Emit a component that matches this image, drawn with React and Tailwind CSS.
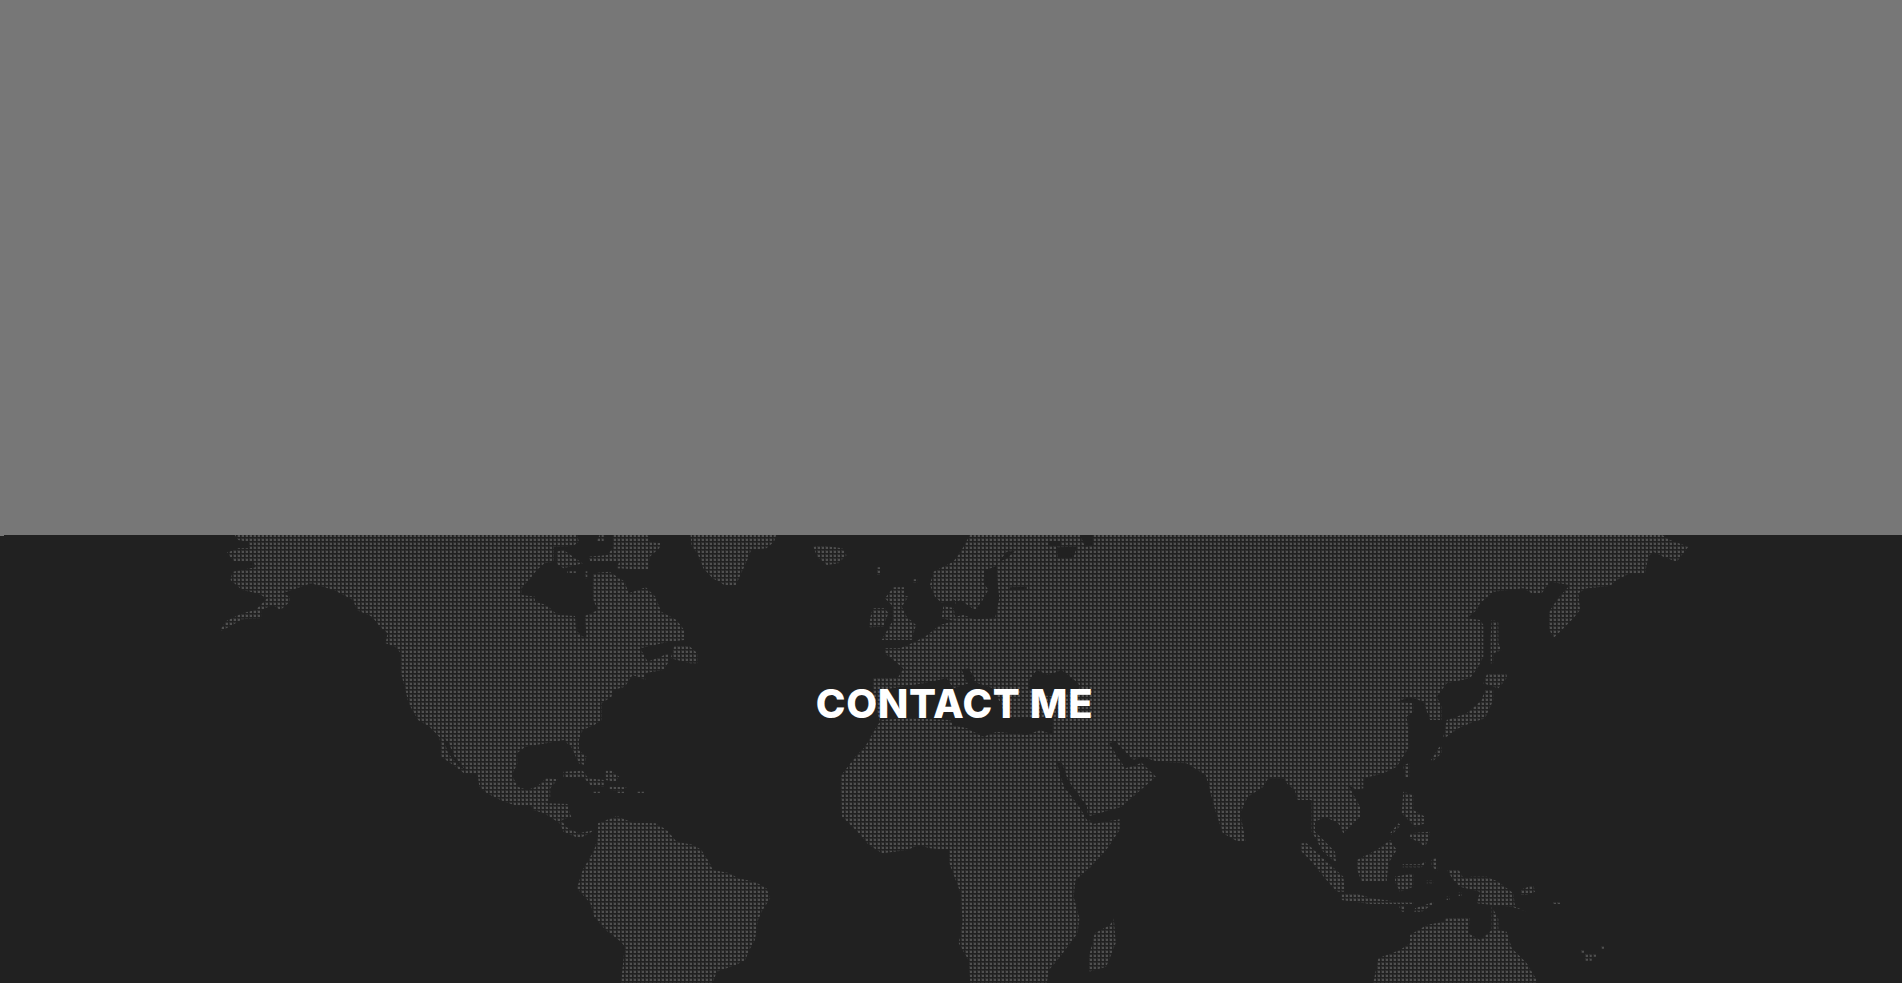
const conv = (ox, oy, sx, sy) => (pts) => pts.map(([x, y]) => [ox + x * sx, oy + y * sy]);
const z4 = conv(200, 530, 0.3827, 1 / 3);
const z5 = conv(800, 530, 0.3827, 1 / 3);
const z6 = conv(1250, 530, 1 / 3, 1 / 3);
const zA = conv(840, 600, 1 / 3, 1 / 3);
const zB = conv(860, 530, 1 / 3, 1 / 3);
const toPath = (pts) => "M" + pts.map(([x, y]) => `${x.toFixed(1)} ${y.toFixed(1)}`).join("L") + "Z";

const eurasiaAfrica = [
  ...zB([[330, 0], [330, 14], [305, 60], [280, 95], [220, 125], [210, 165], [225, 200], [245, 218], [285, 210], [285, 235], [250, 228], [245, 265], [280, 272], [300, 268], [240, 285], [195, 320]]),
  ...zA([[215, 130], [180, 145], [135, 145], [135, 160], [190, 205], [175, 232], [100, 235], [100, 300], [120, 365]]),
  ...z5([[200, 590], [170, 650], [145, 680], [105, 740], [110, 860], [150, 905], [180, 945], [215, 970], [280, 960], [310, 945], [340, 955], [390, 960], [390, 1000], [420, 1090], [425, 1175], [415, 1240], [440, 1290], [445, 1359], [645, 1359], [650, 1320], [680, 1280], [725, 1210], [730, 1165], [715, 1100], [720, 1050], [760, 1010], [800, 960], [835, 900], [835, 868], [765, 882], [750, 860], [840, 830], [860, 810], [930, 740], [885, 690], [895, 680], [935, 695], [1010, 700], [1060, 735], [1085, 840], [1105, 910], [1145, 935], [1165, 935], [1150, 850], [1170, 800]]),
  ...z6([[40, 770], [55, 745], [100, 745], [115, 765], [135, 780], [140, 810], [185, 810], [185, 905], [200, 930], [215, 960], [240, 985], [258, 995], [255, 965], [215, 925], [195, 905], [195, 875], [225, 860], [265, 880], [280, 910], [300, 890], [330, 860], [330, 830], [295, 765], [320, 780], [340, 775], [340, 745], [400, 730], [440, 710], [478, 650], [475, 600], [470, 560], [490, 545], [490, 520], [440, 515], [480, 500], [520, 515], [540, 570], [575, 570], [575, 530], [560, 500], [590, 460], [660, 445], [685, 410], [700, 380], [700, 285], [690, 270], [650, 265], [680, 240], [690, 220], [730, 185], [820, 175], [845, 190], [875, 190], [900, 155], [960, 165], [920, 210], [895, 250], [895, 290], [910, 325], [945, 290], [970, 265], [990, 240], [985, 190], [1010, 175], [1080, 168], [1100, 150], [1140, 130], [1185, 130], [1195, 80], [1210, 65], [1240, 80], [1280, 95], [1315, 50], [1260, 30], [1235, 14], [1235, 0]]),
];

const northAmerica = z4([[90, 0], [90, 14], [100, 30], [125, 35], [130, 55], [100, 55], [70, 68], [90, 95], [140, 95], [145, 112], [85, 125], [80, 150], [110, 180], [150, 190], [175, 205], [145, 240], [110, 250], [70, 272], [55, 295], [55, 303], [85, 285], [110, 268], [160, 265], [160, 240], [190, 225], [210, 240], [235, 215], [235, 200], [215, 190], [240, 180], [290, 160], [350, 180], [400, 210], [410, 240], [450, 260], [470, 290], [490, 310], [485, 340], [510, 350], [525, 370], [525, 430], [535, 470], [545, 520], [570, 570], [600, 590], [625, 620], [630, 650], [630, 680], [655, 700], [690, 730], [725, 730], [730, 770], [750, 790], [795, 815], [830, 828], [865, 825], [870, 840], [900, 850], [940, 880], [950, 905], [990, 925], [1010, 915], [1030, 900], [990, 910], [955, 890], [945, 870], [970, 860], [960, 822], [905, 820], [915, 800], [915, 775], [935, 748], [905, 745], [880, 770], [855, 780], [830, 770], [815, 735], [830, 700], [828, 670], [850, 650], [905, 640], [950, 630], [970, 650], [990, 700], [1005, 705], [1010, 680], [990, 660], [990, 630], [1000, 600], [1030, 585], [1050, 570], [1050, 520], [1075, 500], [1080, 480], [1110, 470], [1130, 435], [1165, 450], [1160, 430], [1210, 420], [1225, 395], [1225, 370], [1170, 395], [1150, 355], [1225, 335], [1265, 330], [1265, 300], [1245, 270], [1205, 245], [1190, 200], [1165, 172], [1120, 190], [1110, 155], [1070, 125], [1028, 130], [1025, 205], [1040, 240], [1005, 258], [1010, 320], [1000, 320], [982, 300], [980, 258], [935, 255], [905, 225], [875, 215], [875, 200], [840, 195], [840, 175], [860, 150], [880, 120], [900, 100], [925, 95], [925, 50], [975, 48], [990, 35], [985, 14], [985, 0]]);

const land = [
  eurasiaAfrica,
  northAmerica,
  z4([[1045, 14], [1055, 14], [1055, 35], [1035, 35]]),
  z4([[1080, 0], [1165, 0], [1175, 35], [1205, 40], [1200, 55], [1175, 80], [1170, 120], [1090, 115], [1095, 95], [1020, 95], [1015, 80], [1065, 75], [1080, 50]]),
  z4([[930, 65], [950, 60], [975, 80], [1000, 100], [950, 115], [930, 100]]),
  z4([[960, 124], [982, 124], [982, 132], [960, 132]]),
  z4([[1005, 124], [1012, 124], [1012, 145], [1005, 145]]),
  z4([[1280, 0], [1510, 0], [1500, 35], [1480, 55], [1440, 60], [1430, 90], [1400, 165], [1375, 168], [1340, 145], [1315, 115], [1300, 70], [1285, 50]]),
  z4([[1240, 345], [1275, 345], [1300, 370], [1300, 400], [1280, 400], [1230, 385]]),
  z4([[950, 725], [1000, 722], [1015, 745], [1055, 750], [1055, 770], [1020, 765], [1000, 740], [950, 742]]),
  z4([[1060, 722], [1075, 722], [1095, 740], [1085, 755], [1060, 750]]),
  z4([[1070, 770], [1115, 772], [1100, 782], [1070, 780]]),
  z4([[1025, 785], [1045, 785], [1045, 792], [1025, 792]]),
  z4([[1090, 785], [1110, 785], [1110, 792], [1090, 792]]),
  z4([[1140, 785], [1160, 785], [1160, 792], [1140, 792]]),
  z4([[1040, 880], [1090, 858], [1130, 878], [1190, 880], [1220, 900], [1245, 935], [1290, 945], [1310, 960], [1330, 995], [1340, 1020], [1385, 1030], [1405, 1045], [1450, 1055], [1480, 1075], [1490, 1105], [1470, 1140], [1458, 1170], [1450, 1230], [1435, 1260], [1425, 1290], [1400, 1305], [1350, 1325], [1340, 1359], [1100, 1359], [1110, 1250], [1100, 1235], [1060, 1200], [1030, 1160], [1020, 1120], [985, 1075], [1000, 1020], [1030, 960], [1040, 920]]),
  z5([[35, 50], [50, 45], [110, 55], [122, 75], [100, 100], [70, 105], [45, 80]]),
  zB([[50, 112], [62, 112], [62, 134], [50, 134]]),
  zB([[160, 148], [172, 148], [172, 158], [160, 158]]),
  zB([[38, 235], [75, 235], [85, 250], [70, 290], [28, 292], [30, 268]]),
  zB([[100, 172], [135, 172], [130, 195], [145, 200], [125, 230], [140, 260], [168, 285], [155, 330], [65, 330], [85, 295], [100, 270], [95, 225], [75, 205]]),
  z5([[820, 1165], [825, 1240], [800, 1310], [755, 1325], [755, 1280], [770, 1210], [810, 1185]]),
  z6([[725, 270], [745, 275], [745, 340], [755, 360], [730, 370], [730, 400], [722, 400], [722, 320]]),
  z6([[712, 430], [770, 430], [770, 445], [745, 475], [700, 460]]),
  z6([[705, 478], [730, 480], [730, 510], [705, 565], [660, 580], [625, 595], [590, 620], [580, 620], [590, 570], [650, 550], [695, 510]]),
  z6([[568, 650], [575, 650], [575, 670], [550, 692], [543, 690]]),
  z6([[460, 705], [478, 700], [478, 742], [465, 742]]),
  z6([[460, 785], [490, 795], [490, 840], [525, 860], [525, 880], [495, 890], [455, 850]]),
  z6([[420, 910], [445, 880], [452, 885], [425, 915]]),
  z6([[480, 910], [540, 905], [535, 930], [525, 950], [505, 935], [480, 925]]),
  z6([[320, 990], [380, 960], [420, 930], [440, 960], [415, 1000], [410, 1055], [335, 1055], [322, 1020]]),
  z6([[150, 940], [170, 940], [225, 990], [280, 1040], [285, 1085], [260, 1085], [225, 1045], [180, 990], [150, 960]]),
  z6([[275, 1090], [315, 1090], [365, 1105], [440, 1115], [490, 1115], [490, 1122], [360, 1122], [275, 1110]]),
  z6([[445, 1125], [465, 1125], [465, 1145], [455, 1145]]),
  z6([[495, 1135], [525, 1125], [550, 1115], [550, 1122], [515, 1145], [493, 1145]]),
  z6([[458, 1003], [515, 1003], [525, 990], [527, 998], [515, 1012], [458, 1012]]),
  z6([[435, 1040], [490, 1030], [490, 1070], [450, 1085], [435, 1055]]),
  z6([[530, 1052], [550, 1052], [550, 1060], [530, 1060]]),
  z6([[545, 990], [560, 980], [562, 1022], [545, 1010]]),
  z6([[590, 1018], [625, 1018], [640, 1045], [665, 1040], [710, 1040], [745, 1055], [790, 1090], [795, 1130], [830, 1145], [785, 1130], [730, 1125], [680, 1120], [690, 1085], [630, 1070], [610, 1050]]),
  z6([[810, 1080], [850, 1065], [855, 1085], [830, 1095], [810, 1095]]),
  z6([[908, 1113], [930, 1113], [930, 1122], [908, 1122]]),
  z6([[590, 1100], [600, 1100], [600, 1110], [590, 1110]]),
  z6([[626, 1088], [636, 1088], [636, 1098], [626, 1098]]),
  z6([[370, 1359], [385, 1285], [450, 1260], [480, 1240], [480, 1215], [530, 1185], [580, 1175], [590, 1162], [660, 1162], [655, 1210], [690, 1230], [725, 1200], [725, 1130], [745, 1165], [745, 1200], [770, 1205], [785, 1255], [830, 1300], [860, 1350], [860, 1359]]),
  z6([[993, 1258], [1003, 1258], [1003, 1268], [993, 1268]]),
  z6([[1005, 1272], [1025, 1272], [1025, 1292], [1005, 1292]]),
  z6([[1030, 1272], [1038, 1272], [1038, 1280], [1030, 1280]]),
  z6([[1054, 1246], [1064, 1246], [1064, 1256], [1054, 1256]]),
];

const water = [
  zA([[120, 270], [175, 262], [250, 250], [320, 235], [340, 265], [400, 245], [460, 265], [500, 352], [640, 352], [640, 405], [600, 390], [560, 405], [470, 395], [430, 410], [380, 385], [340, 375], [330, 360], [200, 355], [120, 360]]),
  zA([[565, 245], [590, 210], [625, 225], [665, 210], [715, 250], [720, 265], [650, 290], [600, 285], [565, 265]]),
  zA([[365, 210], [385, 205], [405, 235], [400, 255], [380, 245]]),
  z5([[670, 695], [685, 700], [700, 750], [750, 830], [755, 880], [730, 830], [690, 770]]),
  z5([[808, 640], [825, 635], [870, 690], [895, 680], [890, 700], [850, 715], [830, 680]]),
  zB([[440, 65], [465, 62], [440, 85], [410, 100], [412, 150], [418, 205], [405, 265], [345, 268], [310, 255], [285, 260], [280, 225], [300, 210], [345, 240], [365, 215], [385, 180], [370, 155], [375, 120], [405, 110]]),
  zB([[450, 172], [500, 170], [500, 180], [450, 180]]),
  zB([[565, 35], [600, 35], [600, 45], [565, 45]]),
  zB([[590, 52], [650, 50], [640, 85], [595, 85]]),
  zB([[660, 14], [700, 14], [700, 45], [675, 50]]),
  z4([[635, 622], [650, 640], [665, 680], [695, 722], [680, 712], [648, 670]]),
];

export default function App() {
  return (
    <div className="flex h-[983px] flex-col overflow-hidden bg-[#212121]">
      <div className="h-[535px] shrink-0 bg-[#777777]" />
      <section className="relative flex flex-1 items-start justify-center pt-[139px]">
        <div className="absolute top-0 left-0 h-px w-1 bg-[#777777]" />
        <svg className="absolute inset-0" width="1902" height="448" viewBox="0 535 1902 448" aria-hidden="true">
          <defs>
            <pattern id="dots" x="1" y="534" width="4" height="4" patternUnits="userSpaceOnUse">
              <rect x="0" y="0" width="3" height="3" fill="#2f2f2f" />
              <rect x="1" y="1" width="2" height="2" fill="#505050" />
            </pattern>
          </defs>
          <path d={land.map(toPath).join("")} fill="url(#dots)" />
          <path d={water.map(toPath).join("")} fill="#212121" />
        </svg>
        <h2 className="relative ml-[7px] font-['Inter',sans-serif] text-[40px] leading-[60px] font-extrabold tracking-[0.6px] text-white">CONTACT ME</h2>
      </section>
    </div>
  );
}
